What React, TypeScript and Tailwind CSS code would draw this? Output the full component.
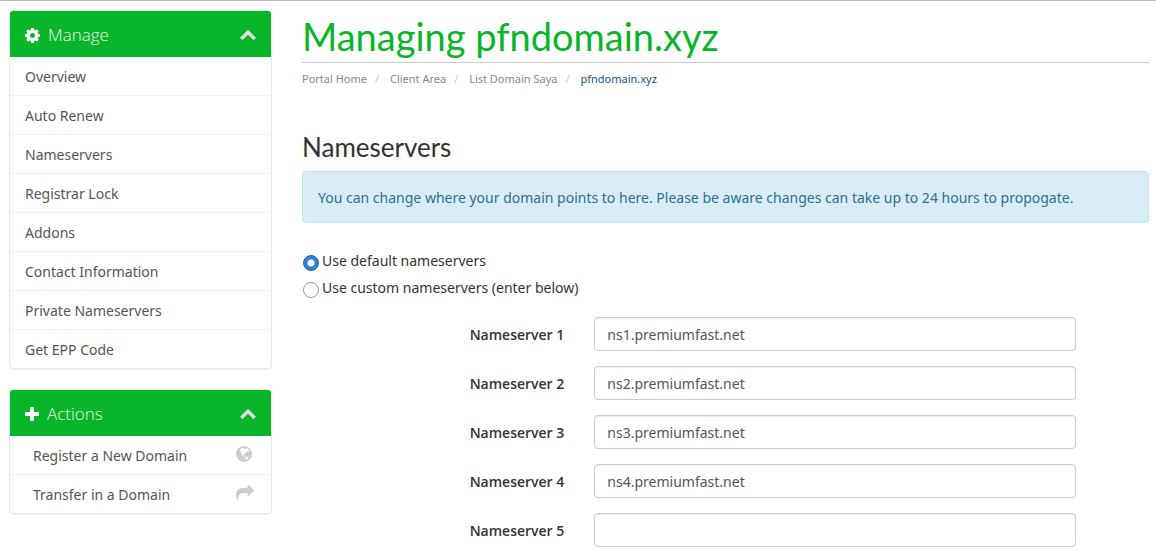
import { useState } from "react"

const manageLinks = [
  "Overview",
  "Auto Renew",
  "Nameservers",
  "Registrar Lock",
  "Addons",
  "Contact Information",
  "Private Nameservers",
  "Get EPP Code",
]

const initialNameservers = [
  "ns1.premiumfast.net",
  "ns2.premiumfast.net",
  "ns3.premiumfast.net",
  "ns4.premiumfast.net",
  "",
]

function CogIcon() {
  return (
    <svg viewBox="0 128 1536 1536" className="size-[15px] fill-white" aria-hidden="true">
      <path d="M1024 896q0-106-75-181t-181-75-181 75-75 181 75 181 181 75 181-75 75-181zm512-109v222q0 12-8 23t-20 13l-185 28q-19 54-39 91 35 50 107 138 10 12 10 25t-9 23q-27 37-99 108t-94 71q-12 0-26-9l-138-108q-44 23-91 38-16 136-29 186-7 28-36 28h-222q-14 0-24.5-8.5t-11.5-21.5l-28-184q-49-16-90-37l-141 107q-10 9-25 9-14 0-25-11-126-114-165-168-7-10-7-23 0-12 8-23 15-21 51-66.5t54-70.5q-27-50-41-99l-183-27q-13-2-21-12.5t-8-23.5v-222q0-12 8-23t19-13l186-28q14-46 39-92-40-57-107-138-10-12-10-24 0-10 9-23 26-36 98.5-107.5t94.5-71.5q13 0 26 10l138 107q44-23 91-38 16-136 29-186 7-28 36-28h222q14 0 24.5 8.5t11.5 21.5l28 184q49 16 90 37l142-107q9-9 24-9 13 0 25 10 129 119 165 170 7 8 7 22 0 12-8 23-15 21-51 66.5t-54 70.5q26 50 41 98l183 28q13 2 21 12.5t8 23.5z" />
    </svg>
  )
}

function PlusIcon() {
  return (
    <svg viewBox="192 128 1408 1408" className="size-[14px] fill-white" aria-hidden="true">
      <path d="M1600 736v192q0 40-28 68t-68 28h-416v416q0 40-28 68t-68 28h-192q-40 0-68-28t-28-68v-416h-416q-40 0-68-28t-28-68v-192q0-40 28-68t68-28h416v-416q0-40 28-68t68-28h192q40 0 68 28t28 68v416h416q40 0 68 28t28 68z" />
    </svg>
  )
}

function ChevronUpIcon() {
  return (
    <svg viewBox="90 480 1612 1035" className="h-[10px] w-4 fill-[#ddd]" aria-hidden="true">
      <path d="M1683 1331l-166 165q-19 19-45 19t-45-19l-531-531-531 531q-19 19-45 19t-45-19l-166-165q-19-19-19-45.5t19-45.5l742-741q19-19 45-19t45 19l742 741q19 19 19 45.5t-19 45.5z" />
    </svg>
  )
}

function GlobeIcon() {
  return (
    <svg viewBox="0 0 16 16" className="mr-[2px] size-4" aria-hidden="true">
      <circle cx="8" cy="8" r="8" fill="#ccc" />
      <path
        fill="#fff"
        d="M5.2 2.2 6.6 1.5 8.2 1.8 7.8 2.6 9.3 3 10.4 2 12.2 2.7 13.7 4.9 12.9 5.4 12 4.8 11.4 5.8 10.2 6.7 9.2 7.3 8.8 8.4 7.6 8 7 8.6 7.6 9.2 8.4 9.2 8.6 10.3 9.6 10.8 9 11.2 7.7 10.6 6.4 9.6 5.4 8.3 5 6.5 4.2 5.4 4 4zM9.6 11.1 10.8 10.7 12.4 11.5 12.2 12.4 10.9 13.6 9.7 14.2 9.8 12.8z"
      />
    </svg>
  )
}

function ShareIcon() {
  return (
    <svg viewBox="0 128 1792 1536" className="h-4 w-[18px] fill-[#ccc]" aria-hidden="true">
      <path d="M1792 640q0 26-19 45l-512 512q-19 19-45 19t-45-19-19-45v-256h-224q-98 0-175.5 6t-154 21.5-133 42.5-105.5 69.5-80 101-48.5 138.5-17.5 181q0 55 5 123 0 6 2.5 23.5t2.5 26.5q0 15-8.5 25t-23.5 10q-16 0-28-17-7-9-13-22t-13.5-30-10.5-24q-127-285-127-451 0-199 53-333 162-403 875-403h224v-256q0-26 19-45t45-19 45 19l512 512q19 19 19 45z" />
    </svg>
  )
}

interface PanelProps {
  title: string
  icon: React.ReactNode
  children: React.ReactNode
}

function Panel({ title, icon, children }: PanelProps) {
  const [open, setOpen] = useState(true)

  return (
    <section className="mb-5 overflow-hidden rounded-[4px] border border-[#e8e8e8] shadow-[0_1px_1px_rgba(0,0,0,0.05)]">
      <h2>
        <button
          type="button"
          aria-expanded={open}
          onClick={() => setOpen(!open)}
          className="flex h-[46px] w-full items-center bg-[#09b529] px-[15px] pt-[2px] font-['Open_Sans',sans-serif] text-[17px] font-light text-[#e8f5e8]"
        >
          {icon}
          <span className="ml-2">{title}</span>
          <span className="ml-auto">
            <ChevronUpIcon />
          </span>
        </button>
      </h2>
      {open && <ul className="divide-y divide-[#f3f3f3]">{children}</ul>}
    </section>
  )
}

export default function App() {
  const [mode, setMode] = useState("default")
  const [nameservers, setNameservers] = useState(initialNameservers)

  const radioClass =
    "mt-1 ml-px size-4 shrink-0 appearance-none rounded-full border border-[#999] bg-white checked:border-[#1c62a8] checked:bg-[radial-gradient(circle,#fff_0_3px,#2f83d2_4px)]"

  return (
    <div className="border-t border-[#bbb] bg-white font-['Noto_Sans','Open_Sans',sans-serif] text-sm text-[#333]">
      <div className="flex gap-[30px] pt-[9px] pr-[7px] pl-[9px]">
        {/* Sidebar */}
        <aside className="w-[263px] shrink-0">
          <Panel title="Manage" icon={<CogIcon />}>
            {manageLinks.map((link) => (
              <li key={link}>
                <a href="#" className="block px-[15px] pt-[10px] pb-2 text-[#555]">
                  {link}
                </a>
              </li>
            ))}
          </Panel>

          <Panel title="Actions" icon={<PlusIcon />}>
            <li>
              <a href="#" className="flex justify-between pt-[10px] pr-[17px] pb-2 pl-[23px] text-[#555]">
                Register a New Domain
                <GlobeIcon />
              </a>
            </li>
            <li>
              <a href="#" className="flex justify-between pt-[10px] pr-[17px] pb-2 pl-[23px] text-[#555]">
                Transfer in a Domain
                <ShareIcon />
              </a>
            </li>
          </Panel>
        </aside>

        {/* Content */}
        <main className="min-w-0 flex-1">
          <h1 className="border-b border-[#ccc] pt-[2px] pb-[2px] font-[Lato,sans-serif] text-[38px] leading-[48px] text-[#09b529]">
            Managing pfndomain.xyz
          </h1>
          <nav aria-label="Breadcrumb" className="pt-2">
            <ol className="flex text-[11px] leading-4 text-[#888]">
              <li><a href="#">Portal Home</a></li>
              <li><span className="px-2 text-[#ccc]">/</span> <a href="#">Client Area</a></li>
              <li><span className="px-2 text-[#ccc]">/</span> <a href="#">List Domain Saya</a></li>
              <li className="text-[#13527c]"><span className="px-2 text-[#ccc]">/</span> pfndomain.xyz</li>
            </ol>
          </nav>

          <h3 className="mt-11 font-[Lato,sans-serif] text-[26px] leading-8">Nameservers</h3>
          <div className="mt-2 rounded-[4px] border border-[#bce8f1] bg-[#d9edf7] px-[15px] pt-4 pb-[14px] text-[#31708f]">
            You can change where your domain points to here. Please be aware changes can take up to 24 hours to propogate.
          </div>

          <form onSubmit={(e) => e.preventDefault()} className="mt-7">
            <label className="mb-[7px] flex gap-[3px]">
              <input type="radio" name="mode" checked={mode === "default"} onChange={() => setMode("default")} className={radioClass} />
              Use default nameservers
            </label>
            <label className="flex gap-[3px]">
              <input type="radio" name="mode" checked={mode === "custom"} onChange={() => setMode("custom")} className={radioClass} />
              Use custom nameservers (enter below)
            </label>

            <div className="-mx-[15px] mt-[19px] space-y-[15px]">
              {nameservers.map((value, i) => (
                <div key={i} className="flex items-center">
                  <label htmlFor={`ns${i + 1}`} className="w-1/3 px-[15px] pt-[2px] text-right font-['Open_Sans',sans-serif] font-semibold">
                    Nameserver {i + 1}
                  </label>
                  <div className="w-7/12 px-[15px]">
                    <input
                      id={`ns${i + 1}`}
                      type="text"
                      value={value}
                      onChange={(e) => setNameservers(nameservers.map((ns, j) => (j === i ? e.target.value : ns)))}
                      className="block h-[34px] w-full rounded-[4px] border border-[#ccc] px-3 text-[#555] shadow-[inset_0_1px_1px_rgba(0,0,0,0.075)]"
                    />
                  </div>
                </div>
              ))}
            </div>
          </form>
        </main>
      </div>
    </div>
  )
}
